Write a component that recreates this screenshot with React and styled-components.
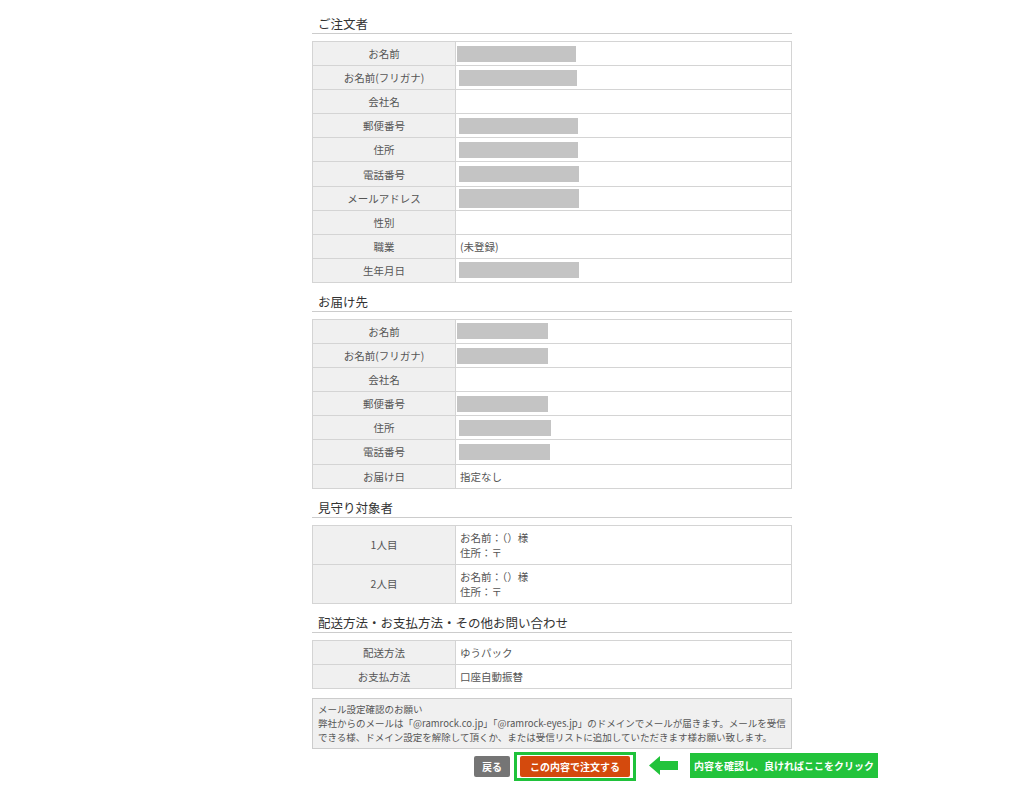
import React from "react";
import styled, { createGlobalStyle } from "styled-components";

const GlobalStyle = createGlobalStyle`
  html, body {
    margin: 0;
    padding: 0;
    background: #fff;
  }
  body {
    font-family: "Noto Sans CJK JP", "Noto Sans", sans-serif;
    color: #555;
  }
`;

const Page = styled.div`
  width: 480px;
  margin-left: 312px;
  padding-top: 15px;
  padding-bottom: 2px;
`;

const SectionTitle = styled.h2`
  margin: ${(p) => (p.$first ? "0" : "10px")} 0 0;
  padding: 0 0 0 6px;
  height: 18px;
  line-height: 18px;
  font-size: 12.5px;
  font-weight: normal;
  color: #333;
  border-bottom: 1px solid #ccc;
`;

const Table = styled.table`
  width: 100%;
  margin-top: 7px;
  border-collapse: collapse;
  font-size: 10.5px;
  color: #555;
`;

const Label = styled.th`
  width: 142px;
  height: ${(p) => (p.$tall ? "38.2px" : "23.1px")};
  padding: 0;
  border: 1px solid #d4d4d4;
  background: #f0f0f0;
  font-weight: normal;
  text-align: center;
  vertical-align: middle;
`;

const Value = styled.td`
  padding: ${(p) => (p.$tall ? "3px 4px" : "0 4px")};
  border: 1px solid #d4d4d4;
  background: #fff;
  vertical-align: middle;
  line-height: 15px;
`;

const Redacted = styled.span`
  display: block;
  width: ${(p) => p.$w}px;
  height: ${(p) => p.$h || 16}px;
  margin-left: ${(p) => p.$x || 0}px;
  background: #c4c4c4;
`;

const Notice = styled.div`
  margin-top: 9px;
  padding: 3px 5px 4px;
  background: #f0f0f0;
  border: 1px solid #ccc;
  font-size: 9.5px;
  line-height: 14px;
  color: #555;
`;

const ButtonRow = styled.div`
  display: flex;
  justify-content: center;
  align-items: center;
  gap: 4px;
  margin-top: 3px;
  margin-left: 6px;
`;

const Button = styled.button`
  height: 21px;
  padding: 0 ${(p) => (p.$primary ? "10px" : "8px")};
  border: none;
  border-radius: 2px;
  background: ${(p) => (p.$primary ? "#d44a0d" : "#757575")};
  color: #fff;
  font-family: "Noto Sans CJK JP", sans-serif;
  font-size: 10px;
  font-weight: bold;
  line-height: 21px;
  cursor: pointer;
`;

const Highlight = styled.div`
  position: relative;
  display: flex;
  padding: 1px 3px;
  border: 3px solid #1fc23b;
`;

const Hint = styled.div`
  position: absolute;
  left: calc(100% + 16px);
  top: -2px;
  display: flex;
  align-items: center;
  gap: 12px;
  white-space: nowrap;
`;

const HintLabel = styled.span`
  display: block;
  padding: 0 4px;
  height: 25px;
  line-height: 25px;
  background: #22c33b;
  color: #fff;
  font-size: 10px;
  font-weight: bold;
`;

const Arrow = () => (
  <svg width="29" height="19" viewBox="0 0 29 19">
    <polygon points="0,9.5 11,0 11,5 29,5 29,14 11,14 11,19" fill="#22c33b" />
  </svg>
);

const orderer = [
  ["お名前", { w: 119, x: 1 }],
  ["お名前(フリガナ)", { w: 118, x: 3 }],
  ["会社名", null],
  ["郵便番号", { w: 119, x: 3 }],
  ["住所", { w: 119, x: 3 }],
  ["電話番号", { w: 120, x: 3 }],
  ["メールアドレス", { w: 120, x: 3, h: 19 }],
  ["性別", null],
  ["職業", "(未登録)"],
  ["生年月日", { w: 120, x: 3 }],
];

const delivery = [
  ["お名前", { w: 91, x: 1 }],
  ["お名前(フリガナ)", { w: 91, x: 1 }],
  ["会社名", null],
  ["郵便番号", { w: 91, x: 1 }],
  ["住所", { w: 92, x: 3 }],
  ["電話番号", { w: 91, x: 3 }],
  ["お届け日", "指定なし"],
];

const Rows = ({ rows }) => (
  <Table>
    <tbody>
      {rows.map(([label, value]) => (
        <tr key={label}>
          <Label>{label}</Label>
          <Value>
            {typeof value === "string"
              ? value
              : value && <Redacted $w={value.w} $x={value.x - 4} $h={value.h} />}
          </Value>
        </tr>
      ))}
    </tbody>
  </Table>
);

export default function App() {
  return (
    <Page>
      <GlobalStyle />
      <SectionTitle $first>ご注文者</SectionTitle>
      <Rows rows={orderer} />

      <SectionTitle>お届け先</SectionTitle>
      <Rows rows={delivery} />

      <SectionTitle>見守り対象者</SectionTitle>
      <Table>
        <tbody>
          {["1人目", "2人目"].map((who) => (
            <tr key={who}>
              <Label $tall>{who}</Label>
              <Value $tall>
                お名前：（）様
                <br />
                住所：〒
              </Value>
            </tr>
          ))}
        </tbody>
      </Table>

      <SectionTitle>配送方法・お支払方法・その他お問い合わせ</SectionTitle>
      <Table>
        <tbody>
          <tr>
            <Label>配送方法</Label>
            <Value>ゆうパック</Value>
          </tr>
          <tr>
            <Label>お支払方法</Label>
            <Value>口座自動振替</Value>
          </tr>
        </tbody>
      </Table>

      <Notice>
        メール設定確認のお願い
        <br />
        弊社からのメールは「@ramrock.co.jp」「@ramrock-eyes.jp」のドメインでメールが届きます。メールを受信できる様、ドメイン設定を解除して頂くか、または受信リストに追加していただきます様お願い致します。
      </Notice>

      <ButtonRow>
        <Button type="button">戻る</Button>
        <Highlight>
          <Button type="button" $primary>
            この内容で注文する
          </Button>
          <Hint>
            <Arrow />
            <HintLabel>内容を確認し、良ければここをクリック</HintLabel>
          </Hint>
        </Highlight>
      </ButtonRow>
    </Page>
  );
}
